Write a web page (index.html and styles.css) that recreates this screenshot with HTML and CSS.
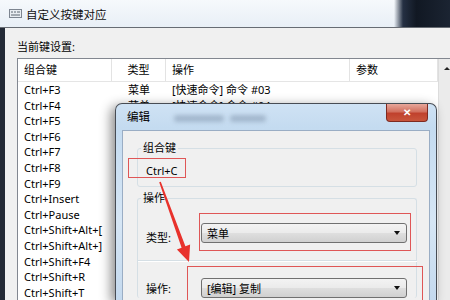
FILE: index.html
```html
<!DOCTYPE html>
<html lang="zh-CN">
<head>
    <meta charset="UTF-8">
    <title>自定义按键对应</title>
    <link rel="stylesheet" href="styles.css">
</head>
<body>

<div class="win">
    <div class="titlebar">
        <svg class="ico" width="13" height="9" viewBox="0 0 13 9">
            <rect x="0.5" y="0.5" width="12" height="8" fill="#e9edf1" stroke="#7d8590"/>
            <path d="M2 3h2M5 3h2M8 3h3M2 6h9" stroke="#5d6670" stroke-width="1"/>
        </svg>
        <span class="title">自定义按键对应</span>
        <div class="glass-dark"></div>
    </div>

    <div class="win-body">
        <div class="cur-label">当前键设置:</div>
        <div class="list">
            <div class="list-main">
                <div class="head">
                    <div>组合键</div>
                    <div class="c2">类型</div>
                    <div>操作</div>
                    <div>参数</div>
                </div>
                <div class="rows"></div>
            </div>
            <div class="scrollbar"><span class="arrow-up"></span></div>
        </div>
    </div>

    <div class="dialog">
        <span class="glass-blur b1"></span>
        <span class="glass-blur b2"></span>
        <div class="dlg-title">编辑</div>
        <div class="close">&#x2715;</div>
        <div class="dlg-content">
            <fieldset class="group g1">
                <legend>组合键</legend>
                <div class="keytext">Ctrl+C</div>
            </fieldset>
            <fieldset class="group g2">
                <legend>操作</legend>
                <div class="field">
                    <span class="flabel type-label">类型:</span>
                    <div class="combo">菜单<span class="drop"></span></div>
                </div>
                <div class="sep"></div>
                <div class="field">
                    <span class="flabel">操作:</span>
                    <div class="combo">[编辑] 复制<span class="drop"></span></div>
                </div>
            </fieldset>
        </div>
    </div>

    <div class="mark mark1"></div>
    <div class="mark mark2"></div>
    <div class="mark mark3"></div>

    <svg class="arrow" width="450" height="300" viewBox="0 0 450 300">
        <polygon points="159.2,182.3 181.6,247.7 176.9,249.4 189,262 190.1,244.6 185.4,246.3 160.8,181.7" fill="#e8322c"/>
    </svg>
</div>

<script>
    // rows under the dialog only show their first column
    let keys = ["F3", "F4", "F5", "F6", "F7", "F8", "F9", "Insert", "Pause",
        "Shift+Alt+[", "Shift+Alt+]", "Shift+F4", "Shift+R", "Shift+T"];
    let html = "";
    keys.forEach((k, i) => {
        let n = String(i + 3).padStart(2, "0");
        let type = i < 2 ? "菜单" : "";
        let op = i < 2 ? `[快速命令] 命令 #${n}` : "";
        html += `<div class="row">
            <div>Ctrl+${k}</div>
            <div class="c2">${type}</div>
            <div>${op}</div>
            <div></div>
        </div>`;
    });
    document.querySelector(".rows").innerHTML = html;
</script>

</body>
</html>
```

FILE: styles.css
```css
html, body {
    margin: 0;
    width: 450px;
    height: 300px;
    overflow: hidden;
}
body {
    font-family: "Noto Sans", "Noto Sans CJK SC", sans-serif;
    font-size: 11px;
    color: #000;
    background: #f0f0f0;
}
.win {
    position: relative;
    height: 300px;
    overflow: hidden;
}

/* main window title */
.titlebar {
    position: relative;
    height: 27px;
    border-bottom: 1px solid #676c73;
    background: linear-gradient(#f6f9fc, #e8eff6);
    display: flex;
    align-items: center;
    padding-left: 9px;
}
.ico { margin-right: 4px; }
.title { font-size: 11.5px; color: #111; }
.glass-dark {
    position: absolute;
    right: 0;
    top: 0;
    bottom: 0;
    width: 56px;
    background: linear-gradient(90deg, rgba(30, 40, 55, 0) 0, #253043 9px, #111823 40%, #1b2432 100%);
}

.win-body {
    display: flex;
    flex-direction: column;
    height: 272px;
    padding: 11px 0 0 12px;
    border-left: 5px solid #232a36;
}
.cur-label {
    height: 16px;
    line-height: 16px;
}
.list {
    margin-top: 3px;
    flex: 1;
    display: flex;
    background: #fff;
    border: 1px solid #828790;
    border-right: none;
    border-bottom: none;
}
.list-main { width: 420px; }
.head, .row {
    display: grid;
    grid-template-columns: 94px 54px 184px 88px;
}
.head {
    height: 22px;
    line-height: 22px;
    border-bottom: 1px solid #e5e5e5;
}
.head > div {
    padding-left: 6px;
    border-right: 1px solid #e3e3e3;
}
.row {
    height: 15.6px;
    line-height: 15.6px;
    white-space: nowrap;
}
.row > div { padding-left: 6px; }
.head .c2, .row .c2 {
    padding-left: 0;
    text-align: center;
}
.scrollbar {
    position: relative;
    width: 17px;
    background: #ebebeb;
    border-left: 1px solid #dcdcdc;
}
.arrow-up {
    position: absolute;
    left: 5px;
    top: 8px;
    border-left: 3px solid transparent;
    border-right: 3px solid transparent;
    border-bottom: 3px solid #222;
}

/* edit dialog */
.dialog {
    position: absolute;
    left: 115px;
    top: 103px;
    width: 322px;
    height: 197px;
    box-sizing: border-box;
    padding: 0 6px;
    border: 1px solid #474c54;
    border-bottom: none;
    border-radius: 7px 7px 0 0;
    background: linear-gradient(#cfe2f4, #c4dbf0 12%, #d6e6f5 60%, #c4d9ee);
    box-shadow: -4px 3px 12px rgba(0, 0, 0, 0.45);
}
.glass-blur {
    position: absolute;
    top: 11px;
    height: 7px;
    border-radius: 3px;
    background: rgba(95, 115, 140, 0.35);
    filter: blur(2px);
}
.b1 { left: 58px; width: 50px; }
.b2 { left: 114px; width: 36px; }
.dlg-title {
    position: relative;
    height: 26px;
    line-height: 26px;
    padding-left: 5px;
    font-size: 11.5px;
}
.close {
    position: absolute;
    right: 8px;
    top: 0;
    width: 42px;
    height: 18px;
    line-height: 17px;
    text-align: center;
    font-size: 10px;
    font-weight: bold;
    color: #fff;
    box-sizing: border-box;
    border: 1px solid #7e2a21;
    border-top: none;
    border-radius: 0 0 4px 4px;
    background: linear-gradient(#e7a79b, #d2705f 45%, #c0412d 55%, #c8553c);
}
.dlg-content {
    height: 170px;
    background: #f0f0f0;
    border: 1px solid #9aadc4;
    border-bottom: none;
    padding-top: 10px;
    box-sizing: border-box;
}
.group {
    margin: 0 12px 0 14px;
    padding: 0 8px 7px;
    border: 1px solid #d5dfe5;
    border-radius: 3px;
}
.group legend {
    margin-left: -5px;
    padding: 0 2px;
    line-height: 14px;
    font-size: 11px;
}
.keytext {
    padding-top: 8px;
    line-height: 16px;
}
.g2 {
    margin-top: 4px;
    padding-bottom: 0;
    border-bottom: none;
}
.field {
    display: flex;
    align-items: center;
    height: 20px;
    margin-top: 18px;
}
.sep + .field { margin-top: 16px; }
.flabel { width: 55px; }
.type-label { padding-top: 7px; }
.combo {
    position: relative;
    width: 206px;
    height: 20px;
    line-height: 19px;
    box-sizing: border-box;
    padding-left: 5px;
    border: 1px solid #707070;
    border-radius: 3px;
    background: linear-gradient(#f3f3f3, #ebebeb 48%, #dedede 52%, #d0d0d0);
}
.drop {
    position: absolute;
    right: 6px;
    top: 7px;
    border-left: 3.5px solid transparent;
    border-right: 3.5px solid transparent;
    border-top: 4px solid #111;
}
.sep {
    margin: 17px -9px 0 -8px;
    height: 1px;
    background: #d5dfe5;
    border-bottom: 1px solid #fff;
}

/* red annotations */
.mark {
    position: absolute;
    border: 1px solid #df5656;
}
.mark1 { left: 128px; top: 158px; width: 56px; height: 18px; }
.mark2 { left: 199px; top: 213px; width: 210px; height: 36px; }
.mark3 { left: 187px; top: 266px; width: 234px; height: 34px; border-bottom: none; }
.arrow {
    position: absolute;
    left: 0;
    top: 0;
    pointer-events: none;
}
```
